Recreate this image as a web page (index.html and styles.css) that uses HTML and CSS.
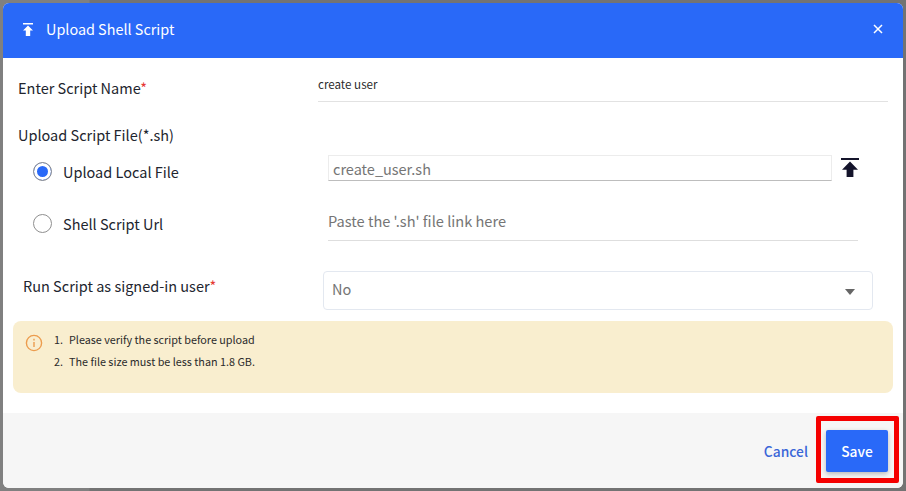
FILE: index.html
```html
<!DOCTYPE html>
<html lang="en">
<head>
<meta charset="utf-8">
<title>Upload Shell Script</title>
<link rel="stylesheet" href="styles.css">
</head>
<body>
<div class="modal">
  <header class="modal-head">
    <svg class="head-icon" viewBox="0 0 12 13" aria-hidden="true"><path d="M1 0h10v1.4H1zM6 2.6l5 5H8.2V13H3.8V7.6H1z"/></svg>
    <span class="modal-title">Upload Shell Script</span>
    <svg class="close-icon" viewBox="0 0 10 10" aria-hidden="true"><path d="M1 1l8 8M9 1l-8 8"/></svg>
  </header>
  <main class="modal-body">
    <div class="name-row">
      <label class="field-label">Enter Script Name<span class="req">*</span></label>
      <div class="name-input">create user</div>
    </div>
    <div class="section-label">Upload Script File(*.sh)</div>
    <div class="radio-row local-row">
      <span class="radio radio-on"></span>
      <span class="radio-label">Upload Local File</span>
      <div class="file-input">create_user.sh</div>
      <svg class="upload-icon" viewBox="0 0 18 19" aria-hidden="true"><path d="M0 0h18v2H0zM9 3.6l8 8.2h-4.6V19H5.6v-7.2H1z"/></svg>
    </div>
    <div class="radio-row url-row">
      <span class="radio"></span>
      <span class="radio-label">Shell Script Url</span>
      <div class="url-input">Paste the '.sh' file link here</div>
    </div>
    <div class="run-row">
      <label class="field-label run-label">Run Script as signed-in user<span class="req">*</span></label>
      <div class="select"><span class="select-value">No</span><span class="caret"></span></div>
    </div>
    <div class="notice">
      <svg class="info-icon" viewBox="0 0 18 18" aria-hidden="true"><circle cx="9" cy="9" r="7.6"/><path d="M9 8v5M9 4.8v1.6"/></svg>
      <ol class="notice-list">
        <li>Please verify the script before upload</li>
        <li>The file size must be less than 1.8 GB.</li>
      </ol>
    </div>
  </main>
  <footer class="modal-foot">
    <a class="cancel">Cancel</a>
    <button class="save" type="button">Save</button>
    <div class="highlight"></div>
  </footer>
</div>
</body>
</html>
```

FILE: styles.css
```css
* { box-sizing: border-box; }
html, body { margin: 0; height: 100%; }
body {
  width: 906px;
  height: 491px;
  overflow: hidden;
  padding: 3px;
  background: linear-gradient(90deg, #808080 0, #808080 89px, #737373 90px, #737373 100%);
  font-family: "Noto Sans CJK SC", "Noto Sans", sans-serif;
  color: #22252e;
}
.modal {
  width: 900px;
  height: 485px;
  background: #fff;
  border-radius: 6px;
  overflow: hidden;
  display: flex;
  flex-direction: column;
}
.modal-head {
  flex: 0 0 55px;
  background: #2969f8;
  color: #fff;
  display: flex;
  align-items: center;
  padding: 0 20px 0 19px;
}
.head-icon { width: 12px; height: 13px; fill: #fff; margin-right: 12px; margin-top: -2px; }
.modal-title { font-size: 14.4px; line-height: 20px; flex: 1; margin-top: -4px; }
.close-icon { width: 10px; height: 10px; stroke: #fff; stroke-width: 1.5; fill: none; margin-top: -4px; }

.modal-body { flex: 1; padding: 0 10px; }
.field-label { font-size: 14.5px; line-height: 20px; font-weight: 400; }
.req { color: #e53935; }
.name-row { display: flex; padding: 20px 5px 0 5px; height: 44px; }
.name-row .field-label { width: 300px; }
.name-input {
  flex: 1;
  height: 26px;
  margin-top: -2px;
  font-size: 11.6px;
  line-height: 16px;
  border-bottom: 1px solid #e2e2e2;
  color: #2c2c2c;
}
.section-label { font-size: 14.5px; line-height: 20px; padding: 23px 0 0 5px; height: 53px; }
.radio-row { display: flex; align-items: center; padding-left: 20px; }
.local-row { height: 26px; }
.url-row { height: 26px; margin-top: 26px; }
.radio {
  width: 19px; height: 19px;
  border: 1px solid #8f8f8f;
  border-radius: 50%;
  flex: none;
  background: #fff;
  margin-top: 6px;
}
.radio-on { background: #2969f8; box-shadow: inset 0 0 0 3px #fff; }
.radio-label { font-size: 14.5px; line-height: 20px; width: 276px; padding-left: 11px; flex: none; margin-top: 8px; }
.file-input {
  width: 504px;
  height: 26px;
  border: 1px solid #ececec;
  border-bottom: 1px solid #bdbdbd;
  font-size: 14.5px;
  line-height: 26px;
  padding-left: 4px;
  color: #757575;
  flex: none;
}
.upload-icon { width: 18px; height: 19px; fill: #14142b; margin-left: 9px; margin-top: -2px; flex: none; }
.url-input {
  width: 530px;
  height: 38px;
  padding-top: 8px;
  font-size: 14.6px;
  line-height: 20px;
  color: #757575;
  border-bottom: 1px solid #dedede;
  align-self: flex-start;
  margin-top: -4px;
}
.run-row { display: flex; padding-left: 10px; margin-top: 38px; height: 39px; }
.run-label { width: 300px; padding-top: 5px; }
.select {
  width: 550px;
  height: 39px;
  border: 1px solid #e3e8f0;
  border-radius: 4px;
  display: flex;
  align-items: center;
  justify-content: space-between;
  padding: 0 17px 0 8px;
  font-size: 14.5px;
  color: #757575;
}
.select-value { margin-top: -5px; }
.caret { width: 0; height: 0; border: 5.5px solid transparent; border-top: 6px solid #666; border-bottom: 0; margin-top: 3px; }
.notice {
  width: 880px;
  height: 72px;
  margin-top: 11px;
  background: #f9eecf;
  border-radius: 8px;
  display: flex;
  padding: 13px 0 0 12px;
}
.info-icon { width: 18px; height: 18px; fill: none; stroke: #ec9c4e; stroke-width: 1.4; flex: none; }
.notice-list {
  margin: -6px 0 0;
  padding: 0 0 0 11px;
  list-style: none;
  counter-reset: step;
  font-size: 10.8px;
  line-height: 22px;
  color: #2b2b2b;
}
.notice-list li { counter-increment: step; display: flex; }
.notice-list li::before { content: counter(step) "."; width: 15px; flex: none; }

.modal-foot {
  flex: 0 0 75px;
  background: #f6f6f6;
  display: flex;
  align-items: center;
  justify-content: flex-end;
  padding: 0 15px 0 0;
  position: relative;
}
.cancel { font-size: 13.8px; font-weight: 500; color: #3a66d8; margin-right: 18px; }
.save {
  width: 62px; height: 42px;
  background: #2969f8;
  border: 0;
  border-radius: 2px;
  color: #fff;
  font: 500 13.8px "Noto Sans CJK SC", sans-serif;
  box-shadow: 0 2px 5px rgba(0,0,0,.25);
}
.highlight {
  position: absolute;
  left: 813px; top: 3px;
  width: 83px; height: 67px;
  border: 5px solid #f50000;
  border-radius: 2px;
}
```
